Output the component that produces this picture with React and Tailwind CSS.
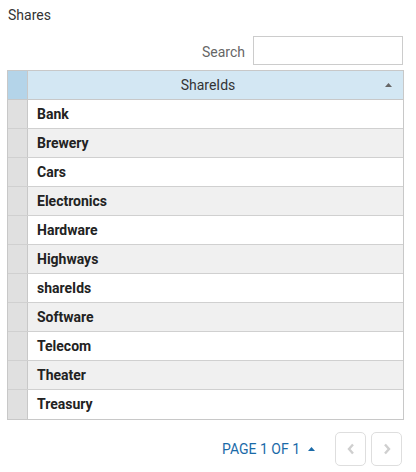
import React from 'react';

const shares = [
  'Bank',
  'Brewery',
  'Cars',
  'Electronics',
  'Hardware',
  'Highways',
  'shareIds',
  'Software',
  'Telecom',
  'Theater',
  'Treasury',
];

const App = () => {
  return (
    <div className="w-[416px] h-[472px] bg-white font-['Roboto',sans-serif] text-[#333]">
      <div className="px-[8px] pt-[7px] text-[14px] leading-[16px]">Shares</div>

      {/* Search */}
      <div className="flex justify-end items-center mt-[13px] pr-[13px]">
        <label className="text-[14px] text-[#666] mr-[8px] pt-[3px]">Search</label>
        <input className="w-[150px] h-[29px] border border-[#ccc] outline-none px-2 text-[13px]" />
      </div>

      {/* Table */}
      <div className="mx-[7px] mt-[5px] w-[397px] border border-[#c8c8c8]">
        <div className="flex h-[29px] border-b border-[#c8c8c8] bg-[#d3e7f3]">
          <div className="w-[20px] bg-[#b4d4e9] border-r border-[#c8c8c8]" />
          <div className="flex-1 relative flex items-center justify-center pr-[15px] text-[14px] text-[#333]">
            ShareIds
            <svg className="absolute right-[11px] top-[12px]" width="7" height="4" viewBox="0 0 7 4">
              <path d="M0 4 L3.5 0 L7 4 Z" fill="#666" />
            </svg>
          </div>
        </div>
        {shares.map((s, i) => (
          <div
            key={s}
            className={`flex h-[29px] ${i < shares.length - 1 ? 'border-b border-[#d0d0d0]' : ''} ${
              i % 2 === 1 ? 'bg-[#f0f0f0]' : 'bg-white'
            }`}
          >
            <div className="w-[20px] bg-[#e0e0e0] border-r border-[#c8c8c8]" />
            <div className="flex-1 flex items-center pl-[9px] text-[14px] font-bold text-[#222]">{s}</div>
          </div>
        ))}
      </div>

      {/* Pagination */}
      <div className="flex justify-end items-center mt-[12px] pr-[14px]">
        <span className="text-[14px] text-[#1a6aa8]">PAGE 1 OF 1</span>
        <svg className="ml-[8px] mr-[20px]" width="7" height="4" viewBox="0 0 7 4">
          <path d="M0 4 L3.5 0 L7 4 Z" fill="#1a6aa8" />
        </svg>
        <button className="w-[31px] h-[34px] border border-[#dedede] rounded-[5px] flex items-center justify-center">
          <svg width="8" height="12" viewBox="0 0 8 12">
            <path d="M6 1.5 L2 6 L6 10.5" fill="none" stroke="#cfcfcf" strokeWidth="2.4" />
          </svg>
        </button>
        <button className="ml-[5px] w-[31px] h-[34px] border border-[#dedede] rounded-[5px] flex items-center justify-center">
          <svg width="8" height="12" viewBox="0 0 8 12">
            <path d="M2 1.5 L6 6 L2 10.5" fill="none" stroke="#cfcfcf" strokeWidth="2.4" />
          </svg>
        </button>
      </div>
    </div>
  );
};

export default App;
